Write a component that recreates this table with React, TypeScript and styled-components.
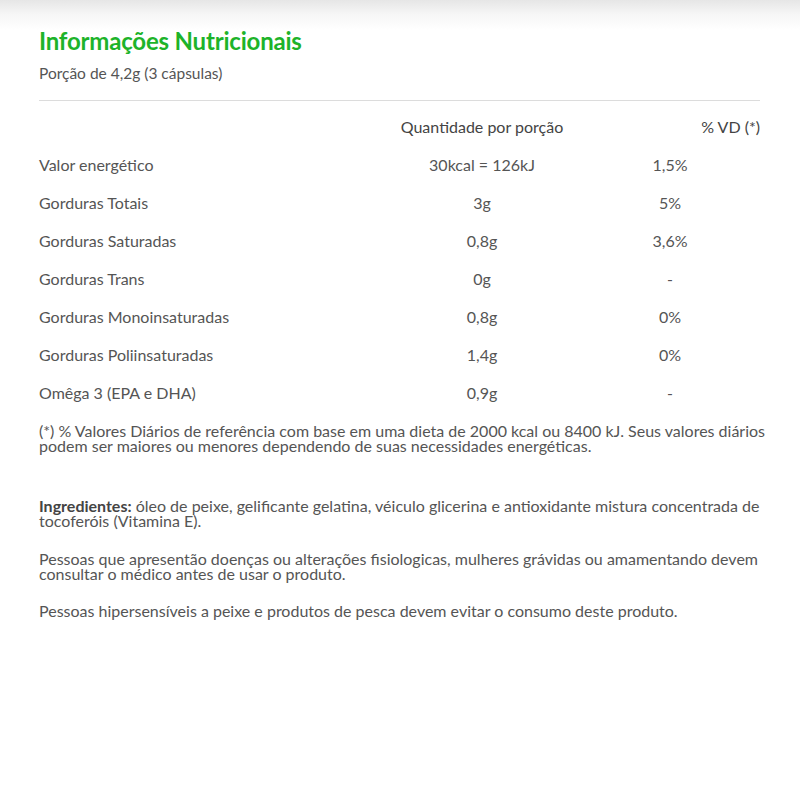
import React from 'react';
import styled, { createGlobalStyle } from 'styled-components';

const GlobalStyle = createGlobalStyle`
  html, body {
    margin: 0;
    padding: 0;
    background: #fff;
  }
  body {
    font-family: Lato, "Open Sans", sans-serif;
  }
`;

const Page = styled.div`
  min-height: 800px;
  box-sizing: border-box;
  padding: 27px 40px 0 39px;
  background: linear-gradient(#e6e6e6 0px, #f6f6f6 14px, #ffffff 30px) no-repeat;
  color: #555;
`;

const Title = styled.h2`
  margin: 0;
  font-size: 24px;
  line-height: 28px;
  font-weight: 700;
  color: #1db32a;
  letter-spacing: -0.2px;
`;

const Portion = styled.p`
  margin: 9px 0 0;
  font-size: 15.5px;
  line-height: 18px;
  color: #555;
`;

const Divider = styled.hr`
  margin: 18px 0 0;
  border: 0;
  border-top: 1px solid #dcdcdc;
`;

const Table = styled.div`
  margin-top: 6px;
  display: grid;
  grid-template-columns: 345px 196px 1fr;
  grid-auto-rows: 38px;
  font-size: 16px;
`;

const Cell = styled.div<{ align?: 'left' | 'center' | 'right'; head?: boolean }>`
  display: flex;
  align-items: center;
  white-space: nowrap;
  justify-content: ${({ align }) =>
    align === 'center' ? 'center' : align === 'right' ? 'flex-end' : 'flex-start'};
  color: ${({ head }) => (head ? '#444' : '#555')};
`;

const VdValue = styled.span`
  width: 180px;
  text-align: center;
`;

const Note = styled.p<{ gap: number }>`
  margin: ${({ gap }) => gap}px -26px 0 0;
  font-size: 16px;
  line-height: 15px;
  color: #555;

  b {
    font-weight: 700;
    color: #444;
  }
`;

const rows: [string, string, string][] = [
  ['Valor energético', '30kcal = 126kJ', '1,5%'],
  ['Gorduras Totais', '3g', '5%'],
  ['Gorduras Saturadas', '0,8g', '3,6%'],
  ['Gorduras Trans', '0g', '-'],
  ['Gorduras Monoinsaturadas', '0,8g', '0%'],
  ['Gorduras Poliinsaturadas', '1,4g', '0%'],
  ['Omêga 3 (EPA e DHA)', '0,9g', '-'],
];

export default function App() {
  return (
    <>
      <GlobalStyle />
      <Page>
        <Title>Informações Nutricionais</Title>
        <Portion>Porção de 4,2g (3 cápsulas)</Portion>
        <Divider />
        <Table>
          <Cell />
          <Cell align="center" head>Quantidade por porção</Cell>
          <Cell align="right" head>% VD (*)</Cell>
          {rows.map(([label, qty, vd]) => (
            <React.Fragment key={label}>
              <Cell>{label}</Cell>
              <Cell align="center">{qty}</Cell>
              <Cell>
                <VdValue>{vd}</VdValue>
              </Cell>
            </React.Fragment>
          ))}
        </Table>
        <Note gap={12}>
          (*) % Valores Diários de referência com base em uma dieta de 2000 kcal ou 8400 kJ. Seus valores diários
          podem ser maiores ou menores dependendo de suas necessidades energéticas.
        </Note>
        <Note gap={45}>
          <b>Ingredientes:</b> óleo de peixe, gelificante gelatina, véiculo glicerina e antioxidante mistura concentrada de
          tocoferóis (Vitamina E).
        </Note>
        <Note gap={23}>
          Pessoas que apresentão doenças ou alterações fisiologicas, mulheres grávidas ou amamentando devem
          consultar o médico antes de usar o produto.
        </Note>
        <Note gap={22}>
          Pessoas hipersensíveis a peixe e produtos de pesca devem evitar o consumo deste produto.
        </Note>
      </Page>
    </>
  );
}
